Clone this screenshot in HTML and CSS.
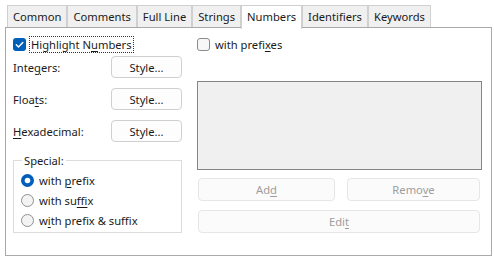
FILE: index.html
```html
<!DOCTYPE html>
<html lang="en">
<head>
    <meta charset="UTF-8">
    <title>Numbers</title>
    <link rel="stylesheet" href="styles.css">
</head>
<body>
    <div class="tabs">
        <div class="tab">Common</div>
        <div class="tab">Comments</div>
        <div class="tab">Full Line</div>
        <div class="tab">Strings</div>
        <div class="tab active">Numbers</div>
        <div class="tab">Identifiers</div>
        <div class="tab">Keywords</div>
    </div>
    <div class="panel">
        <div class="left-col">
            <div class="check-row">
                <svg class="box" width="13" height="13" viewBox="0 0 13 13">
                    <rect x="0" y="0" width="13" height="13" rx="3" fill="#005fb8"/>
                    <path d="M3.3 6.8 L5.5 9 L9.8 4.4" fill="none" stroke="#fff" stroke-width="1.4" stroke-linecap="round" stroke-linejoin="round"/>
                </svg>
                <span class="focus">Highlight N<u>u</u>mbers</span>
            </div>
            <div class="style-row">
                <span>Inte<u>g</u>ers:</span>
                <button class="btn style-btn">Style...</button>
            </div>
            <div class="style-row">
                <span>Floa<u>t</u>s:</span>
                <button class="btn style-btn">Style...</button>
            </div>
            <div class="style-row">
                <span><u>H</u>exadecimal:</span>
                <button class="btn style-btn">Style...</button>
            </div>
            <fieldset class="special">
                <legend>Special:</legend>
                <div class="radio-row">
                    <svg width="13" height="13" viewBox="0 0 13 13">
                        <circle cx="6.5" cy="6.5" r="6.5" fill="#005fb8"/>
                        <circle cx="6.5" cy="6.5" r="2.8" fill="#fff"/>
                    </svg>
                    <span>with <u>p</u>refix</span>
                </div>
                <div class="radio-row">
                    <svg width="13" height="13" viewBox="0 0 13 13">
                        <circle cx="6.5" cy="6.5" r="6" fill="#f3f3f3" stroke="#8f8f8f" stroke-width="1"/>
                    </svg>
                    <span>with su<u>f</u>fix</span>
                </div>
                <div class="radio-row">
                    <svg width="13" height="13" viewBox="0 0 13 13">
                        <circle cx="6.5" cy="6.5" r="6" fill="#f3f3f3" stroke="#8f8f8f" stroke-width="1"/>
                    </svg>
                    <span>w<u>i</u>th prefix &amp; suffix</span>
                </div>
            </fieldset>
        </div>
        <div class="right-col">
            <div class="check-row">
                <svg class="box" width="13" height="13" viewBox="0 0 13 13">
                    <rect x="0.5" y="0.5" width="12" height="12" rx="2.5" fill="#f7f7f7" stroke="#8a8a8a" stroke-width="1"/>
                </svg>
                <span>with prefi<u>x</u>es</span>
            </div>
            <div class="list-box"></div>
            <div class="btn-row">
                <button class="btn disabled add-btn">Ad<u>d</u></button>
                <button class="btn disabled remove-btn">Remo<u>v</u>e</button>
            </div>
            <button class="btn disabled edit-btn">Edi<u>t</u></button>
        </div>
    </div>
</body>
</html>
```

FILE: styles.css
```css
body {
    margin: 0;
    background-color: #fff;
    font-family: "Noto Sans", "Open Sans", sans-serif;
    font-size: 11.2px;
    color: #1a1a1a;
    width: 494px;
    height: 258px;
    overflow: hidden;
}
u {
    text-decoration-thickness: 1px;
    text-underline-offset: 2px;
}
.tabs {
    display: flex;
    margin: 5px 0 -1px 7px;
    height: 23px;
}
.tab {
    height: 21px;
    line-height: 21px;
    padding: 0 5px;
    background-color: #f0f0f0;
    border: 1px solid #d0d0d0;
    border-bottom: none;
}
.tab.active {
    height: 23px;
    background-color: #fff;
    position: relative;
    z-index: 1;
}
.panel {
    display: flex;
    margin-left: 5px;
    border: 1px solid #a9a9a9;
    padding: 0 9px 0 7px;
    box-sizing: border-box;
    width: 487px;
    height: 229px;
}
.left-col {
    width: 169px;
    padding-top: 8px;
}
.right-col {
    width: 285px;
    margin-left: 15px;
    padding-top: 8px;
}
.check-row {
    display: flex;
    align-items: center;
    height: 17px;
}
.check-row .box {
    margin-right: 5px;
    flex-shrink: 0;
}
.left-col .check-row .box {
    margin-right: 4px;
}
.focus {
    outline: 1px dotted #333;
    padding: 0 1px;
    line-height: 15px;
}
.style-row {
    display: flex;
    align-items: center;
    justify-content: space-between;
    height: 22px;
    margin-top: 10px;
}
.check-row + .style-row {
    margin-top: 3px;
}
.btn {
    font-family: inherit;
    font-size: 11.2px;
    border-radius: 4px;
    padding: 0;
    margin: 0;
    box-sizing: border-box;
}
.style-btn {
    width: 71px;
    height: 22px;
    background-color: #fdfdfd;
    border: 1px solid #d0d0d0;
    color: #1a1a1a;
}
.special {
    margin: 11px 0 0 0;
    border: 1px solid #dcdcdc;
    border-radius: 0;
    padding: 2px 0 1px 7px;
    height: 80px;
    box-sizing: border-box;
}
.special legend {
    padding: 0 2px;
    margin-left: 1px;
    line-height: 15px;
}
.radio-row {
    display: flex;
    align-items: center;
    height: 20px;
}
.radio-row svg {
    margin-right: 5px;
}
.list-box {
    height: 89px;
    margin-top: 28px;
    background-color: #f0f0f0;
    border: 1px solid #848484;
    box-sizing: border-box;
}
.btn-row {
    display: flex;
    margin-top: 8px;
    padding: 0 2px 0 1px;
}
.disabled {
    height: 23px;
    background-color: #fbfbfb;
    border: 1px solid #e6e6e6;
    color: #9d9d9d;
}
.add-btn {
    width: 137px;
}
.remove-btn {
    flex: 1;
    margin-left: 12px;
}
.edit-btn {
    display: block;
    width: 282px;
    margin: 9px 0 0 1px;
}
```
